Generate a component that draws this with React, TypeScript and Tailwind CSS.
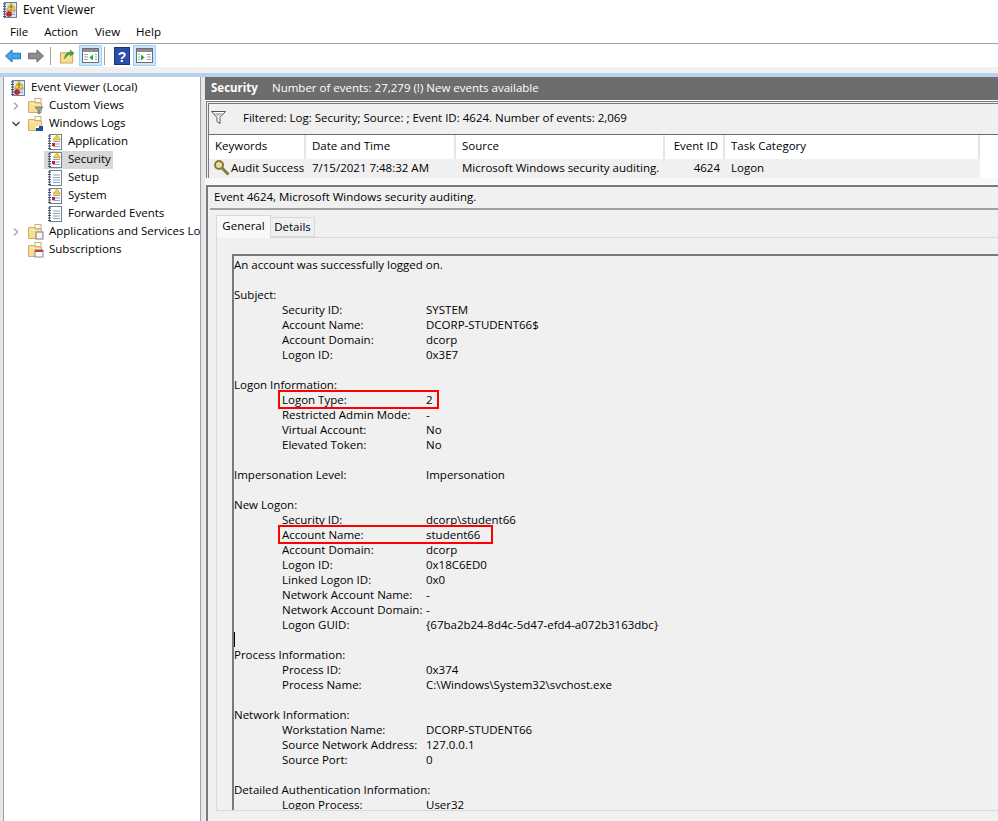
import { ReactNode } from "react";

const LogIcon = ({ warn, big }: { warn?: boolean; big?: boolean }) => (
  <svg width="16" height="16" viewBox="0 0 16 16" className="shrink-0">
    <rect x="2.5" y="0.5" width="12" height="15" fill={big ? "#dfe6f2" : "#fff"} stroke="#6f7f96" />
    <path d="M1 2h3M1 4.5h3M1 7h3M1 9.5h3M1 12h3M1 14.5h3" stroke="#3f4b5e" strokeWidth="1" />
    <path d="M6 5h7M6 7.5h7M6 10h7M6 12.5h7" stroke="#8ea4c2" strokeWidth="1" />
    {warn &&
      (big ? (
        <>
          <path d="M9 1l4.5 7.5h-9z" fill="#f7d038" stroke="#b98f10" strokeWidth="0.7" />
          <path d="M9 3.5v2.5M9 6.8v1" stroke="#333" strokeWidth="1" />
          <circle cx="7" cy="12" r="2.6" fill="#c4262e" stroke="#8e1a20" strokeWidth="0.5" />
        </>
      ) : (
        <>
          <path d="M10 0.5l3.5 5.5h-7z" fill="#f7d038" stroke="#c79a10" strokeWidth="0.6" />
          <rect x="5" y="9" width="3" height="3" fill="#c4262e" />
        </>
      ))}
  </svg>
);

const Folder = ({ children }: { children?: ReactNode }) => (
  <svg width="16" height="16" viewBox="0 0 16 16" className="shrink-0">
    <path d="M0.5 3.5v11h13v-9h-6l-1-2z" fill="#f7dd91" stroke="#d3ae5c" />
    <rect x="7" y="0.5" width="6" height="4" fill="#fff" stroke="#c9b27a" />
    <path d="M1.5 6h11" stroke="#fff3c9" />
    {children}
  </svg>
);

const Chevron = ({ open, dark }: { open?: boolean; dark?: boolean }) => (
  <svg width="10" height="10" viewBox="0 0 10 10" className="shrink-0">
    {open ? (
      <path d="M1.5 3L5 6.5 8.5 3" fill="none" stroke={dark ? "#404040" : "#a6a6a6"} strokeWidth="1.4" />
    ) : (
      <path d="M3 1.5L6.5 5 3 8.5" fill="none" stroke="#a6a6a6" strokeWidth="1.4" />
    )}
  </svg>
);

const PaneIcon = ({ right }: { right?: boolean }) => (
  <div className="w-[23px] h-[21px] flex items-center justify-center bg-[#cce8ff] border border-[#99d1ff]">
    <svg width="17" height="15" viewBox="0 0 17 15">
      <rect x="0.5" y="0.5" width="16" height="14" fill="#fff" stroke="#6d6d6d" />
      <rect x="1" y="1" width="15" height="3" fill="#8c8c8c" />
      {right ? (
        <>
          <path d="M5 6.5l3.5 3-3.5 3z" fill="#2aa52a" />
          <path d="M11 6.5h4M11 9h4M11 11.5h4M2 6.5h2M2 9h2M2 11.5h2" stroke="#8ea4c2" />
        </>
      ) : (
        <>
          <path d="M11 6.5l-3.5 3 3.5 3z" fill="#2aa52a" />
          <path d="M2 6.5h4M2 9h4M2 11.5h4M13 6.5h2M13 9h2M13 11.5h2" stroke="#8ea4c2" />
        </>
      )}
    </svg>
  </div>
);

const TreeRow = ({
  indent,
  icon,
  label,
  chevron,
  selected,
}: {
  indent: string;
  icon: ReactNode;
  label: string;
  chevron?: ReactNode;
  selected?: boolean;
}) => (
  <div className={`flex items-center h-[18px] whitespace-nowrap ${indent}`}>
    {chevron && <div className="w-[18px] shrink-0 flex justify-center">{chevron}</div>}
    <div className={`flex items-center shrink-0 gap-[5px] h-[18px] pl-[3px] pr-[2px] ${selected ? "bg-[#d9d9d9]" : ""}`}>
      {icon}
      <span className="pb-[2px]">{label}</span>
    </div>
  </div>
);

type Line = { h?: string; l?: string; v?: string; box?: string; caret?: boolean };

const lines: Line[] = [
  { h: "An account was successfully logged on." },
  {},
  { h: "Subject:" },
  { l: "Security ID:", v: "SYSTEM" },
  { l: "Account Name:", v: "DCORP-STUDENT66$" },
  { l: "Account Domain:", v: "dcorp" },
  { l: "Logon ID:", v: "0x3E7" },
  {},
  { h: "Logon Information:" },
  { l: "Logon Type:", v: "2", box: "w-[161px]" },
  { l: "Restricted Admin Mode:", v: "-" },
  { l: "Virtual Account:", v: "No" },
  { l: "Elevated Token:", v: "No" },
  {},
  { h: "Impersonation Level:", v: "Impersonation" },
  {},
  { h: "New Logon:" },
  { l: "Security ID:", v: "dcorp\\student66" },
  { l: "Account Name:", v: "student66", box: "w-[215px]" },
  { l: "Account Domain:", v: "dcorp" },
  { l: "Logon ID:", v: "0x18C6ED0" },
  { l: "Linked Logon ID:", v: "0x0" },
  { l: "Network Account Name:", v: "-" },
  { l: "Network Account Domain:", v: "-" },
  { l: "Logon GUID:", v: "{67ba2b24-8d4c-5d47-efd4-a072b3163dbc}" },
  { caret: true },
  { h: "Process Information:" },
  { l: "Process ID:", v: "0x374" },
  { l: "Process Name:", v: "C:\\Windows\\System32\\svchost.exe" },
  {},
  { h: "Network Information:" },
  { l: "Workstation Name:", v: "DCORP-STUDENT66" },
  { l: "Source Network Address:", v: "127.0.0.1" },
  { l: "Source Port:", v: "0" },
  {},
  { h: "Detailed Authentication Information:" },
  { l: "Logon Process:", v: "User32" },
];

const DetailRow = ({ line }: { line: Line }) => (
  <div className="relative flex h-[15px] leading-[15px] whitespace-nowrap">
    {line.caret && <div className="w-px h-[15px] bg-black" />}
    {line.h && <span className={line.v ? "w-[192px] shrink-0" : ""}>{line.h}</span>}
    {line.l && <span className="w-[144px] shrink-0 ml-[48px]">{line.l}</span>}
    {line.v && <span>{line.v}</span>}
    {line.box && <div className={`absolute left-[44px] -top-[2px] h-[19px] border-2 border-[#ff0000] ${line.box}`} />}
  </div>
);

export default function App() {
  return (
    <div className="w-[998px] h-[821px] overflow-hidden flex flex-col bg-[#f0f0f0] text-black text-[11.5px] font-['Open_Sans',sans-serif]">
      <div className="h-[20px] bg-white flex items-center pl-[2px] gap-[5px] shrink-0">
        <LogIcon warn big />
        <span className="text-[12px]">Event Viewer</span>
      </div>
      <div className="h-[24px] bg-white border-b border-[#a0a0a0] flex items-center pl-[10px] gap-[16px] shrink-0">
        <span>File</span>
        <span>Action</span>
        <span className="ml-[1px]">View</span>
        <span>Help</span>
      </div>
      <div className="h-[23px] bg-white flex items-center pl-[5px] shrink-0">
        <svg width="16" height="14" viewBox="0 0 17 14">
          <path d="M0.5 7L7.5 0.5V4H16.5V10H7.5V13.5z" fill="#3fa4ea" stroke="#1a6fc0" />
        </svg>
        <svg width="16" height="14" viewBox="0 0 17 14" className="ml-[7px]">
          <path d="M16.5 7L9.5 0.5V4H0.5V10H9.5V13.5z" fill="#8c8c8c" stroke="#6b6b6b" />
        </svg>
        <div className="w-px h-[18px] bg-[#a0a0a0] ml-[6px]" />
        <svg width="15" height="16" viewBox="0 0 16 16" className="ml-[9px]">
          <path d="M0.5 4.5v11h13v-11z" fill="#f7dd91" stroke="#c9a24a" />
          <path d="M5 11C5 6 8 4 11 4V1.5L15 5 11 8V6C9 6 7 8 5 11z" fill="#3fae3f" stroke="#1f7a1f" strokeWidth="0.5" />
        </svg>
        <div className="ml-[4px]">
          <PaneIcon />
        </div>
        <div className="w-px h-[18px] bg-[#a0a0a0] ml-[2px]" />
        <svg width="16" height="18" viewBox="0 0 16 18" className="ml-[9px]">
          <rect x="0.5" y="0.5" width="15" height="17" fill="#2b4ea8" stroke="#1c3278" />
          <text x="8" y="14.5" textAnchor="middle" fontSize="14" fontWeight="700" fill="#fff" fontFamily="Liberation Sans">?</text>
        </svg>
        <div className="ml-[3px]">
          <PaneIcon right />
        </div>
      </div>
      <div className="h-[6px] shrink-0 bg-[#f0f0f0]" />
      <div className="h-[4px] shrink-0 bg-[#b9d1ea]" />
      <div className="flex-1 min-h-0 flex bg-[#e3e8ee]">
        <div className="w-[198px] ml-[3px] bg-white border-x border-[#a0a0a0] pt-[2px] shrink-0 overflow-hidden">
          <TreeRow indent="pl-[3px]" icon={<LogIcon warn big />} label="Event Viewer (Local)" />
          <TreeRow
            indent="pl-[3px]"
            chevron={<Chevron />}
            label="Custom Views"
            icon={
              <Folder>
                <path d="M7 9h8l-3 3.5V16h-2v-3.5z" fill="#8fa0b5" stroke="#56657a" strokeWidth="0.6" />
              </Folder>
            }
          />
          <TreeRow
            indent="pl-[3px]"
            chevron={<Chevron open dark />}
            label="Windows Logs"
            icon={
              <Folder>
                <rect x="8" y="10" width="7" height="5" fill="#1d4fa8" />
                <rect x="8" y="10" width="3" height="2" fill="#fff" />
              </Folder>
            }
          />
          <TreeRow indent="pl-[40px]" icon={<LogIcon warn />} label="Application" />
          <TreeRow indent="pl-[40px]" icon={<LogIcon warn />} label="Security" selected />
          <TreeRow indent="pl-[40px]" icon={<LogIcon />} label="Setup" />
          <TreeRow indent="pl-[40px]" icon={<LogIcon warn />} label="System" />
          <TreeRow indent="pl-[40px]" icon={<LogIcon />} label="Forwarded Events" />
          <TreeRow
            indent="pl-[3px]"
            chevron={<Chevron />}
            label="Applications and Services Logs"
            icon={
              <Folder>
                <rect x="8" y="8" width="7" height="7" fill="#f4f4f4" stroke="#7c7c7c" />
              </Folder>
            }
          />
          <TreeRow
            indent="pl-[21px]"
            label="Subscriptions"
            icon={
              <Folder>
                <rect x="7" y="8" width="8" height="7" fill="#fff" stroke="#7c8aa0" />
                <rect x="7" y="8" width="8" height="2" fill="#d4363c" />
              </Folder>
            }
          />
        </div>
        <div className="w-[4px] shrink-0" />
        <div className="flex-1 min-w-0 flex flex-col bg-[#f0f0f0]">
          <div className="h-[23px] shrink-0 bg-[#6d6d6d] flex items-center pl-[6px] pb-[2px] text-white whitespace-nowrap">
            <span className="font-bold w-[61px]">Security</span>
            <span>Number of events: 27,279 (!) New events available</span>
          </div>
          <div className="h-px shrink-0 bg-white" />
          <div className="ml-[1px] h-[77px] shrink-0 border-t-[3px] border-double border-[#7a7a7a] border-l-[3px] flex flex-col">
            <div className="h-[30px] shrink-0 flex items-center pl-[2px] pb-[3px] gap-[17px] whitespace-nowrap">
              <svg width="15" height="13" viewBox="0 0 15 13">
                <path d="M0.5 0.5h14L9 6.5v6l-3-2v-4z" fill="#fff" stroke="#555" />
                <path d="M3 2h9L9 5H6z" fill="#bdbdbd" />
              </svg>
              <span>Filtered: Log: Security; Source: ; Event ID: 4624. Number of events: 2,069</span>
            </div>
            <div className="flex-1 bg-white border-y border-[#6d6d6d] flex flex-col whitespace-nowrap">
              <div className="h-[24px] flex items-center">
                <div className="w-[97px] h-full pl-[6px] pb-[3px] flex items-center border-r-2 border-[#e5e5e5]">Keywords</div>
                <div className="w-[150px] h-full pl-[6px] pb-[3px] flex items-center border-r-2 border-[#e5e5e5]">Date and Time</div>
                <div className="w-[209px] h-full pl-[6px] pb-[3px] flex items-center border-r-2 border-[#e5e5e5]">Source</div>
                <div className="w-[60px] h-full pr-[5px] pb-[3px] flex items-center justify-end border-r-2 border-[#e5e5e5]">Event ID</div>
                <div className="w-[255px] h-full pl-[6px] pb-[3px] flex items-center border-r-2 border-[#e5e5e5]">Task Category</div>
              </div>
              <div className="h-[19px] flex items-center w-[771px] bg-[#f0f0f0] pb-[2px]">
                <div className="w-[97px] flex items-center gap-[1px] pl-[4px]">
                  <svg width="17" height="17" viewBox="0 0 17 17" className="shrink-0">
                    <circle cx="6" cy="6" r="4" fill="#e8dca0" stroke="#8a7a3a" strokeWidth="2" />
                    <path d="M9 9l6.5 6.5" stroke="#8a7a3a" strokeWidth="3" />
                  </svg>
                  <span>Audit Success</span>
                </div>
                <div className="w-[150px] pl-[6px]">7/15/2021 7:48:32 AM</div>
                <div className="w-[209px] pl-[6px]">Microsoft Windows security auditing.</div>
                <div className="w-[60px] pr-[5px] text-right">4624</div>
                <div className="w-[255px] pl-[6px]">Logon</div>
              </div>
            </div>
          </div>
          <div className="h-[7px] shrink-0 bg-[#f8f8f8]" />
          <div className="flex-1 min-h-0 border-t-2 border-[#7a7a7a] ml-[1px] border-l-2 flex flex-col">
            <div className="h-[21px] shrink-0 flex items-center pl-[6px] pb-[2px] whitespace-nowrap">
              Event 4624, Microsoft Windows security auditing.
            </div>
            <div className="h-[2px] shrink-0 bg-[#a0a0a0] ml-[2px]" />
            <div className="flex-1 min-h-0 flex flex-col pl-[8px] pt-[4px] pb-[10px]">
              <div className="flex items-end h-[23px] shrink-0">
                <div className="w-[55px] h-[23px] pb-[2px] bg-[#f8f8f8] border border-b-0 border-[#d9d9d9] flex items-center justify-center -mb-px relative">
                  General
                </div>
                <div className="w-[44px] h-[20px] bg-[#f0f0f0] border border-l-0 border-[#d9d9d9] flex items-center justify-center">
                  Details
                </div>
              </div>
              <div className="flex-1 min-h-0 border-t border-b border-l border-[#d9d9d9] pl-[15px] pt-[16px]">
                <div className="h-full border-l-2 border-t-2 border-[#7a7a7a] pt-[1px] overflow-hidden">
                  {lines.map((line, i) => (
                    <DetailRow key={i} line={line} />
                  ))}
                </div>
              </div>
            </div>
          </div>
        </div>
      </div>
    </div>
  );
}
